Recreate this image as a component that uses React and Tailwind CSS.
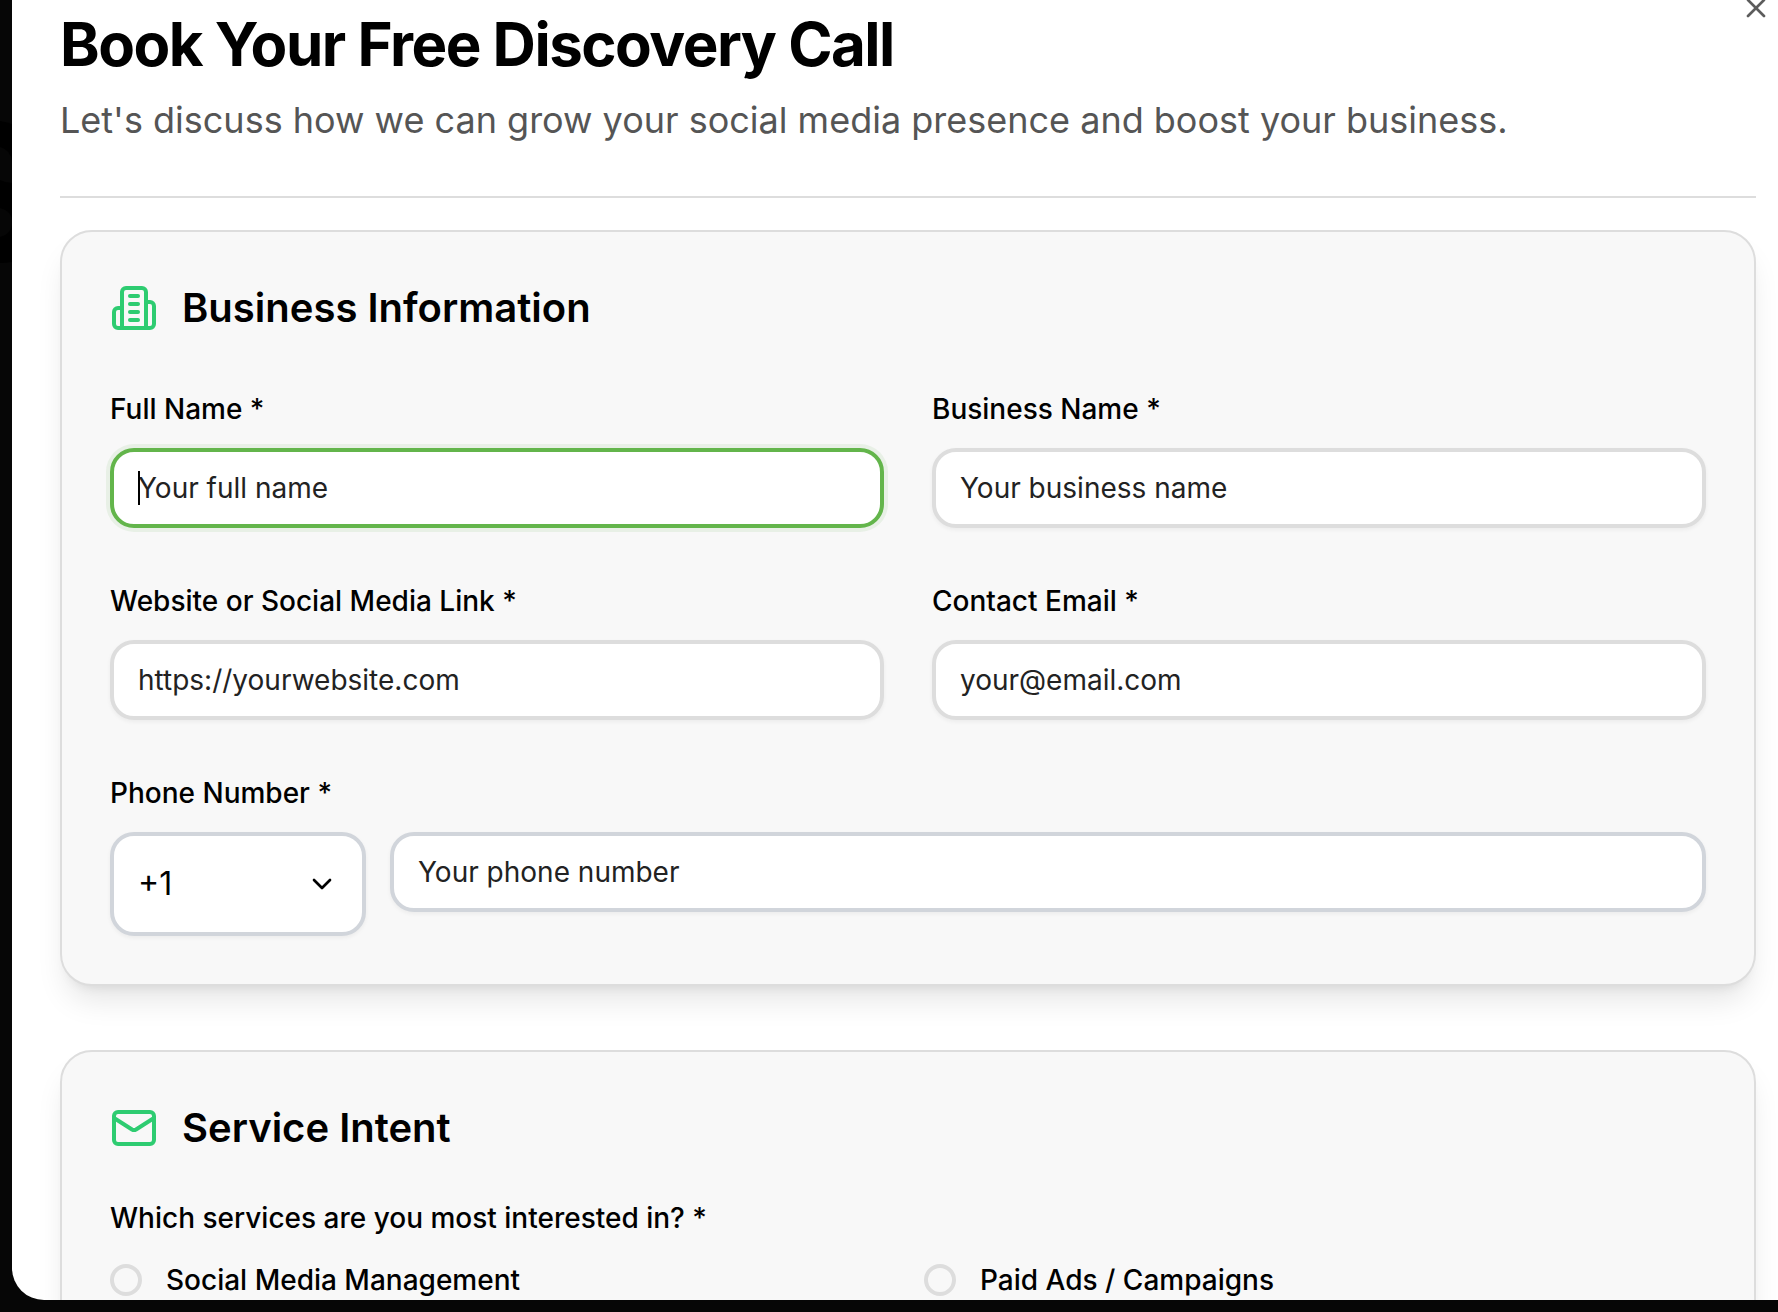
import { ChevronDown, Mail, X } from "lucide-react";

function OfficeIcon({ className }) {
  return (
    <svg
      className={className}
      viewBox="0 0 24 24"
      fill="none"
      stroke="currentColor"
      strokeWidth="2"
      strokeLinecap="round"
      strokeLinejoin="round"
    >
      <path d="M6 22V4a2 2 0 0 1 2-2h8a2 2 0 0 1 2 2v18Z" />
      <path d="M6 12H4a2 2 0 0 0-2 2v6a2 2 0 0 0 2 2h2" />
      <path d="M18 9h2a2 2 0 0 1 2 2v9a2 2 0 0 1-2 2h-2" />
      <path d="M10 6h4" />
      <path d="M10 10h4" />
      <path d="M10 14h4" />
      <path d="M10 18h4" />
    </svg>
  );
}

function Label({ children }) {
  return <label className="mb-3.5 block text-[28px] leading-[50px] font-medium text-black">{children}</label>;
}

const inputBase =
  "block h-20 w-full rounded-3xl border-4 bg-white px-6 text-[28px] text-black outline-none placeholder:text-[#222222]";

function Input({ placeholder, focused = false, tone = "neutral" }) {
  const look = focused
    ? "border-[#63b54b] shadow-[0_0_0_4px_rgba(99,181,75,0.1)]"
    : tone === "cool"
      ? "border-[#d1d5db] shadow-[0_2px_4px_rgba(0,0,0,0.05)]"
      : "border-[#dddddd] shadow-[0_2px_4px_rgba(0,0,0,0.05)]";
  return (
    <div className="relative w-full">
      <input className={`${inputBase} ${look}`} placeholder={placeholder} />
      {focused && <span className="absolute top-[23px] left-7 h-[34px] w-0.5 bg-black" />}
    </div>
  );
}

function Field({ label, ...props }) {
  return (
    <div>
      <Label>{label}</Label>
      <Input {...props} />
    </div>
  );
}

function Card({ icon: Icon, title, children }) {
  return (
    <section className="rounded-[32px] border-2 border-[#dddddd] bg-[#f8f8f8] p-12 shadow-[0_20px_30px_-6px_rgba(0,0,0,0.1),0_8px_12px_-8px_rgba(0,0,0,0.1)]">
      <div className="flex items-center gap-6">
        <Icon className="size-12 text-[#2ecc71]" />
        <h2 className="text-[40px] leading-[56px] font-semibold text-black">{title}</h2>
      </div>
      {children}
    </section>
  );
}

function Option({ children }) {
  return (
    <div className="flex items-center gap-6">
      <span className="size-8 shrink-0 rounded-full border-4 border-[#dddddd]" />
      <span className="text-[28px] leading-[40px] font-medium text-black">{children}</span>
    </div>
  );
}

/* Dimmed lettering of the page behind the dialog. */
function Backdrop() {
  return (
    <svg className="absolute top-0 left-0" width="12" height="1312" viewBox="0 0 12 1312">
      <path d="M0 121Q6 122 12 124V262Q6 263 0 263Z" fill="#000000" />
      <path d="M0 147Q11 150 12 162V183Q6 183 0 180Z" fill="#060606" />
      <path d="M0 208Q12 211 12 222Q12 234 0 237Z" fill="#060606" />
    </svg>
  );
}

export default function App() {
  return (
    <div className="relative h-[1312px] w-[1778px] overflow-hidden bg-[#060606] pl-3 font-['Inter',sans-serif]">
      <Backdrop />
      <main className="relative h-[1300px] overflow-hidden rounded-bl-[32px] bg-white pr-[10px] pl-12">
        <button className="absolute -top-2 right-1.5 text-[#5c5c5c]" aria-label="Close">
          <X className="size-8" />
        </button>
        <div className="w-[1696px]">
          <header className="border-b-2 border-[#dddddd] pt-2 pb-12">
            <h1 className="text-[60px] leading-[72px] font-bold tracking-[-0.025em] text-black">Book Your Free Discovery Call</h1>
            <p className="mt-3 text-[36px] leading-[56px] text-[#555555]">
              Let's discuss how we can grow your social media presence and boost your business.
            </p>
          </header>
          <div className="mt-8 flex flex-col gap-16">
            <Card icon={OfficeIcon} title="Business Information">
              <div className="mt-12 grid grid-cols-2 gap-12">
                <Field label="Full Name *" placeholder="Your full name" focused />
                <Field label="Business Name *" placeholder="Your business name" />
                <Field label="Website or Social Media Link *" placeholder="https://yourwebsite.com" />
                <Field label="Contact Email *" placeholder="your@email.com" />
                <div className="col-span-2">
                  <Label>Phone Number *</Label>
                  <div className="flex items-start gap-6">
                    <button className="flex h-[104px] w-64 shrink-0 items-center justify-between rounded-3xl border-4 border-[#d1d5db] bg-white px-6 text-[32px] text-black shadow-[0_2px_4px_rgba(0,0,0,0.05)]">
                      <span>+1</span>
                      <ChevronDown className="size-8" />
                    </button>
                    <Input placeholder="Your phone number" tone="cool" />
                  </div>
                </div>
              </div>
            </Card>
            <Card icon={Mail} title="Service Intent">
              <p className="mt-10 text-[28px] leading-[44px] font-medium text-black">
                Which services are you most interested in? *
              </p>
              <div className="mt-5 grid grid-cols-2 gap-8">
                <Option>Social Media Management</Option>
                <Option>Paid Ads / Campaigns</Option>
              </div>
            </Card>
          </div>
        </div>
      </main>
    </div>
  );
}
